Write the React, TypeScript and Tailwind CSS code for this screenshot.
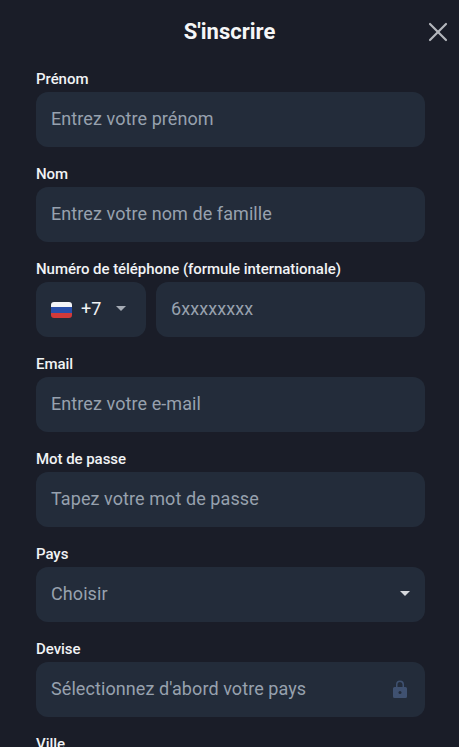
import { X } from 'lucide-react'

function Caret({ className }: { className: string }) {
  return (
    <svg viewBox="0 0 10 5" className={className}>
      <path d="M0 0h10L5 5z" fill="currentColor" />
    </svg>
  )
}

function LockIcon() {
  return (
    <svg viewBox="0 0 14 18" className="h-[18px] w-[14px] text-[#3f5170]">
      <path
        d="M3 7V4.6a4 4 0 0 1 8 0V7h1.5A1.5 1.5 0 0 1 14 8.500v8a1.500 1.500 0 0 1-1.500 1.500h-11A1.500 1.500 0 0 1 0 16.500v-8A1.500 1.500 0 0 1 1.500 7zm1.500 0h5V4.600a2.500 2.500 0 0 0-5 0z"
        fill="currentColor"
        fillRule="evenodd"
      />
      <circle cx="7" cy="12.500" r="1.500" fill="#232c3a" />
    </svg>
  )
}

function Flag() {
  return (
    <div className="mt-[2px] flex h-[16px] w-[21px] flex-col overflow-hidden rounded-[3px]">
      <div className="h-[5px] bg-[#f4f5f7]" />
      <div className="h-[6px] bg-[#2a4fa8]" />
      <div className="h-[5px] bg-[#d23a3a]" />
    </div>
  )
}

function Label({ children }: { children: string }) {
  return (
    <label className="mb-[2px] h-[21px] text-[15px] leading-[21px] font-medium tracking-[-0.05px] text-[#f1f3f5]">
      {children}
    </label>
  )
}

function Field({ label, placeholder }: { label: string; placeholder: string }) {
  return (
    <div className="flex flex-col">
      <Label>{label}</Label>
      <div className="flex h-[55px] items-center rounded-[12px] bg-[#232c3a] px-[15px] pb-[2px] text-[18px] tracking-[0.08px] text-[#97a1ae]">
        {placeholder}
      </div>
    </div>
  )
}

export default function App() {
  return (
    <div className="h-[747px] w-full overflow-hidden bg-[#1a1d28] font-['Roboto',sans-serif]">
      <div className="relative flex h-[62px] items-center justify-center">
        <h1 className="text-[22px] font-bold text-[#f5f6f7]">S'inscrire</h1>
        <button className="absolute top-[16px] right-[5px] text-[#b4b7bc]">
          <X className="h-[32px] w-[32px]" strokeWidth={1.6} />
        </button>
      </div>
      <div className="mt-[7px] flex flex-col gap-[17px] pr-[34px] pl-[36px]">
        <Field label="Prénom" placeholder="Entrez votre prénom" />
        <Field label="Nom" placeholder="Entrez votre nom de famille" />
        <div className="flex flex-col">
          <Label>Numéro de téléphone (formule internationale)</Label>
          <div className="flex gap-[10px]">
            <div className="flex h-[55px] w-[110px] items-center rounded-[12px] bg-[#232c3a] pb-[2px] pl-[15px] text-[18px] text-[#f1f3f5]">
              <Flag />
              <span className="ml-[9px]">+7</span>
              <Caret className="ml-[15px] h-[5px] w-[10px] text-[#a5abb4]" />
            </div>
            <div className="flex h-[55px] flex-1 items-center rounded-[12px] bg-[#232c3a] px-[15px] pb-[2px] text-[18px] tracking-[0.08px] text-[#97a1ae]">
              6xxxxxxxx
            </div>
          </div>
        </div>
        <Field label="Email" placeholder="Entrez votre e-mail" />
        <Field label="Mot de passe" placeholder="Tapez votre mot de passe" />
        <div className="flex flex-col">
          <Label>Pays</Label>
          <div className="flex h-[55px] items-center justify-between rounded-[12px] bg-[#232c3a] px-[15px] pb-[2px] text-[18px] tracking-[0.08px] text-[#97a1ae]">
            Choisir
            <Caret className="h-[5px] w-[10px] text-[#d5d8dc]" />
          </div>
        </div>
        <div className="flex flex-col">
          <Label>Devise</Label>
          <div className="flex h-[55px] items-center justify-between rounded-[12px] bg-[#232c3a] pr-[18px] pb-[2px] pl-[15px] text-[18px] tracking-[0.08px] text-[#97a1ae]">
            Sélectionnez d'abord votre pays
            <LockIcon />
          </div>
        </div>
        <Label>Ville</Label>
      </div>
    </div>
  )
}
